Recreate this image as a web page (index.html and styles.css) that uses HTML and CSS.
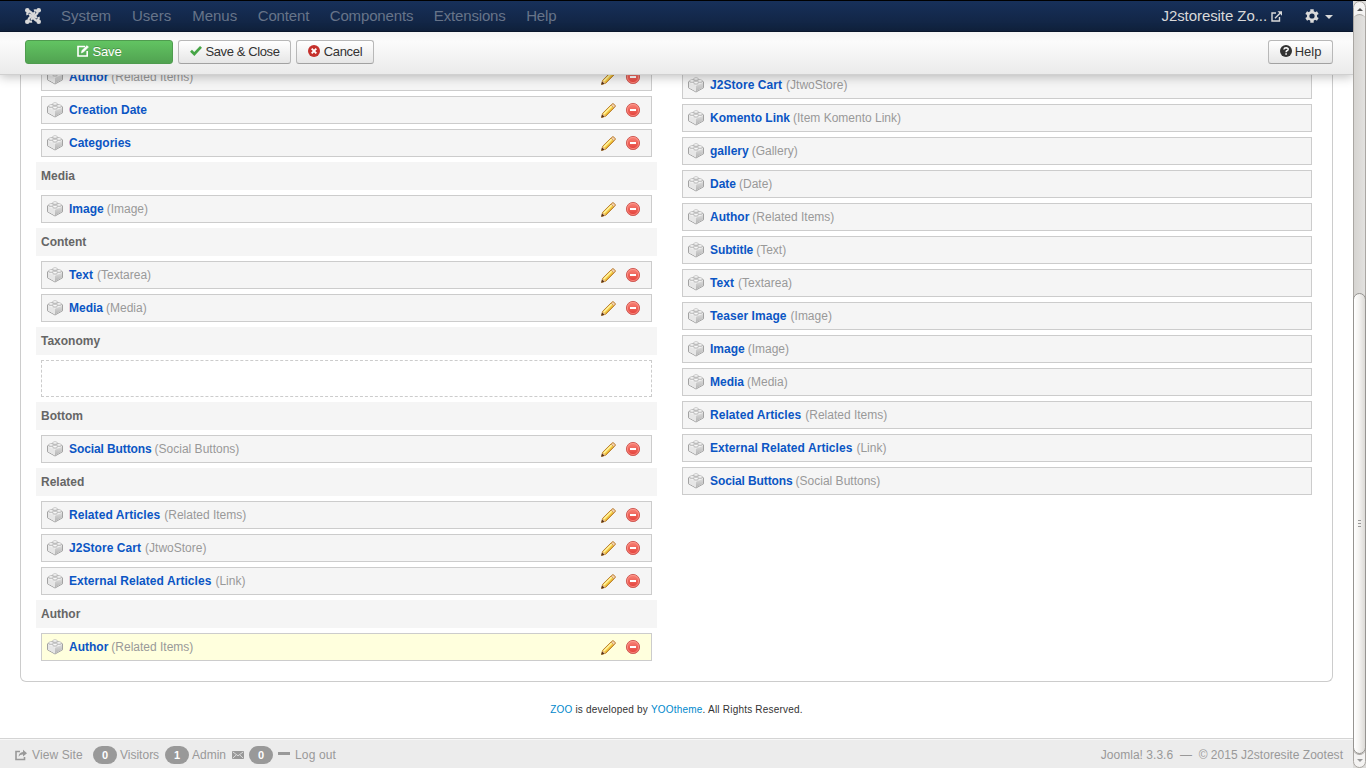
FILE: index.html
```
<!DOCTYPE html>
<html lang="en">
<head>
<meta charset="utf-8">
<title>J2storesite Zootest - Administration</title>
<link rel="stylesheet" href="styles.css">
</head>
<body>
<svg class="defs" aria-hidden="true">
  <defs>
    <linearGradient id="red" x1="0" y1="0" x2="0" y2="1"><stop offset="0" stop-color="#f9877b"/><stop offset="1" stop-color="#e23c36"/></linearGradient>
    <linearGradient id="brick-side" x1="0" y1="0" x2="0" y2="1"><stop offset="0" stop-color="#dcdcdc"/><stop offset="1" stop-color="#b4b4b4"/></linearGradient>
  </defs>
  <symbol id="brick" viewBox="0 0 16 16">
    <path d="M.5 4.800 5.500 2.500h5l5 2.300v6L8 15 .5 10.800z" fill="#f2f2f2" stroke="#a2a2a2" stroke-width="1" stroke-linejoin="round"/>
    <path d="M8 8.800 15 5.800v4.700L8 14.500z" fill="url(#brick-side)"/>
    <path d="M1 5.800 8 8.800v5.700l-7-4z" fill="#e6e6e6"/>
    <path d="M5.700 1.900v2h4.600v-2M1.700 4v1.700h4.500V4M9.800 4v1.700h4.500V4M5.700 5.800v1.800h4.600V5.800" fill="#c4c4c4"/>
    <g fill="#fdfdfd" stroke="#b0b0b0" stroke-width=".7"><ellipse cx="8" cy="1.900" rx="2.300" ry="1.200"/><ellipse cx="4" cy="3.900" rx="2.300" ry="1.200"/><ellipse cx="12" cy="3.900" rx="2.300" ry="1.200"/><ellipse cx="8" cy="5.700" rx="2.300" ry="1.200"/></g>
  </symbol>
  <symbol id="pencil" viewBox="0 0 16 16">
    <path d="M.6 15.400 1.700 11 11.300 1.500Q12.300.6 13.300 1l1.500 1.300q.8.900 0 2L5.200 14z" fill="#f6d04d" stroke="#b67a28" stroke-width="1"/>
    <path d="M3 11.800 11.500 3.300" stroke="#fff3a0" stroke-width="1.500"/>
    <path d="M4.700 13.200 13.200 4.700" stroke="#dfa52a" stroke-width="1"/>
    <path d="m10.800 2.200 1.500-1.100 1.200.1 1.300 1.300-.1 1.600-1 1.200z" fill="#f3d2ae" stroke="#c08850" stroke-width=".7"/>
    <path d="m1.900 11.300 3 2.700-4 1.200z" fill="#e9c092"/>
    <path d="m.3 15.700.8-3.500 2.600 2.500z" fill="#54301a"/>
  </symbol>
  <symbol id="minus" viewBox="0 0 16 16">
    <circle cx="8" cy="8" r="6.600" fill="url(#red)" stroke="#d0605a" stroke-width="1"/>
    <circle cx="8" cy="8" r="5.600" fill="none" stroke="#ff9d92" stroke-width=".7"/>
    <path d="M5 7h6v2H5z" fill="#fff"/>
  </symbol>
</svg>

<div class="window">
  <div class="page">
    <header class="top">
      <nav class="navbar">
        <svg class="joomla" viewBox="0 0 16 16"><g fill="none" stroke="#d9d9d9" stroke-width="2.300" stroke-linejoin="round"><path d="M2.600 7Q1.800 5 3.300 3.800q1.300-.9 2.700.5l5.800 5.800"/><path d="M9 2.600q2-.8 3.200.7.900 1.300-.5 2.700L5.900 11.800"/><path d="M13.400 9q.8 2-.7 3.200-1.300.9-2.700-.5L4.200 5.900"/><path d="M7 13.400q-2 .8-3.200-.7-.9-1.300.5-2.700l5.800-5.800"/></g><g fill="#d9d9d9"><circle cx="2.300" cy="2.300" r="2.300"/><circle cx="13.700" cy="2.300" r="2.300"/><circle cx="2.300" cy="13.700" r="2.300"/><circle cx="13.700" cy="13.700" r="2.300"/></g></svg>
        <ul class="menu"><li>System</li><li>Users</li><li>Menus</li><li class="tight">Content</li><li class="tight">Components</li><li class="tight">Extensions</li><li class="tight">Help</li></ul>
        <span class="site">J2storesite Zo...</span>
        <svg class="external" viewBox="0 0 11 11" fill="none" stroke="#d9d9d9" stroke-width="1.400"><path d="M5 2H1v8h7.500V6M4 7.200l5.500-5.500"/><path d="M6.500.2H11v4.500z" fill="#d9d9d9" stroke="none"/></svg>
        <svg class="gear" viewBox="0 0 14 14"><g stroke="#d9d9d9" stroke-width="3.400"><path d="M7 .3v13.400M1.200 3.600l11.600 6.800M12.800 3.600 1.200 10.400"/></g><circle cx="7" cy="7" r="5.100" fill="#d9d9d9"/><circle cx="7" cy="7" r="2.600" fill="#142848"/></svg>
        <span class="caret"></span>
      </nav>
      <div class="toolbar">
        <button class="btn save"><svg viewBox="0 0 12 12" fill="none" stroke="#fff"><path d="M8 1.500H1v9.500h9.200V6" stroke-width="1.600"/><path d="m4.300 8 .6-2.400L10 .6l1.500 1.500-5 5z" fill="#fff" stroke-width=".5"/></svg><span>Save</span></button>
        <button class="btn saveclose"><svg viewBox="0 0 12 12"><path d="M1 5.800 4.300 9 11 1.800" fill="none" stroke="#46a546" stroke-width="2.700"/></svg><span>Save &amp; Close</span></button>
        <button class="btn cancel"><svg viewBox="0 0 12 12"><circle cx="6" cy="6" r="6" fill="#c5302b"/><path d="m3.700 3.700 4.600 4.600m0-4.600L3.700 8.300" stroke="#fff" stroke-width="1.900"/></svg><span>Cancel</span></button>
        <button class="btn help"><svg viewBox="0 0 12 12"><circle cx="6" cy="6" r="6" fill="#333"/><path d="M3.900 4.500q.2-1.700 2.200-1.700 2.100.1 2.100 1.500 0 1-1.200 1.500-.9.400-.9 1.400" fill="none" stroke="#fff" stroke-width="1.500"/><path d="M5.300 8.200h1.600v1.500H5.300z" fill="#fff"/></svg><span>Help</span></button>
      </div>
    </header>

    <main class="panel">
      <section class="positions">
        <div class="item"><svg class="brick"><use href="#brick"/></svg><b>Author</b><span>(Related Items)</span><svg class="edit"><use href="#pencil"/></svg><svg class="remove"><use href="#minus"/></svg></div>
        <div class="item"><svg class="brick"><use href="#brick"/></svg><b>Creation Date</b><svg class="edit"><use href="#pencil"/></svg><svg class="remove"><use href="#minus"/></svg></div>
        <div class="item"><svg class="brick"><use href="#brick"/></svg><b>Categories</b><svg class="edit"><use href="#pencil"/></svg><svg class="remove"><use href="#minus"/></svg></div>
        <h2>Media</h2>
        <div class="item"><svg class="brick"><use href="#brick"/></svg><b>Image</b><span>(Image)</span><svg class="edit"><use href="#pencil"/></svg><svg class="remove"><use href="#minus"/></svg></div>
        <h2>Content</h2>
        <div class="item"><svg class="brick"><use href="#brick"/></svg><b class="wide">Text</b><span>(Textarea)</span><svg class="edit"><use href="#pencil"/></svg><svg class="remove"><use href="#minus"/></svg></div>
        <div class="item"><svg class="brick"><use href="#brick"/></svg><b>Media</b><span>(Media)</span><svg class="edit"><use href="#pencil"/></svg><svg class="remove"><use href="#minus"/></svg></div>
        <h2>Taxonomy</h2>
        <div class="empty"></div>
        <h2>Bottom</h2>
        <div class="item"><svg class="brick"><use href="#brick"/></svg><b class="narrow">Social Buttons</b><span>(Social Buttons)</span><svg class="edit"><use href="#pencil"/></svg><svg class="remove"><use href="#minus"/></svg></div>
        <h2>Related</h2>
        <div class="item"><svg class="brick"><use href="#brick"/></svg><b class="wide">Related Articles</b><span>(Related Items)</span><svg class="edit"><use href="#pencil"/></svg><svg class="remove"><use href="#minus"/></svg></div>
        <div class="item"><svg class="brick"><use href="#brick"/></svg><b class="wide">J2Store Cart</b><span>(JtwoStore)</span><svg class="edit"><use href="#pencil"/></svg><svg class="remove"><use href="#minus"/></svg></div>
        <div class="item"><svg class="brick"><use href="#brick"/></svg><b class="wide">External Related Articles</b><span>(Link)</span><svg class="edit"><use href="#pencil"/></svg><svg class="remove"><use href="#minus"/></svg></div>
        <h2>Author</h2>
        <div class="item active"><svg class="brick"><use href="#brick"/></svg><b>Author</b><span>(Related Items)</span><svg class="edit"><use href="#pencil"/></svg><svg class="remove"><use href="#minus"/></svg></div>
      </section>
      <section class="elements">
        <div class="item"><svg class="brick"><use href="#brick"/></svg><b class="wide">J2Store Cart</b><span>(JtwoStore)</span></div>
        <div class="item"><svg class="brick"><use href="#brick"/></svg><b>Komento Link</b><span>(Item Komento Link)</span></div>
        <div class="item"><svg class="brick"><use href="#brick"/></svg><b>gallery</b><span>(Gallery)</span></div>
        <div class="item"><svg class="brick"><use href="#brick"/></svg><b>Date</b><span>(Date)</span></div>
        <div class="item"><svg class="brick"><use href="#brick"/></svg><b>Author</b><span>(Related Items)</span></div>
        <div class="item"><svg class="brick"><use href="#brick"/></svg><b class="narrow">Subtitle</b><span>(Text)</span></div>
        <div class="item"><svg class="brick"><use href="#brick"/></svg><b class="wide">Text</b><span>(Textarea)</span></div>
        <div class="item"><svg class="brick"><use href="#brick"/></svg><b class="wide">Teaser Image</b><span>(Image)</span></div>
        <div class="item"><svg class="brick"><use href="#brick"/></svg><b>Image</b><span>(Image)</span></div>
        <div class="item"><svg class="brick"><use href="#brick"/></svg><b>Media</b><span>(Media)</span></div>
        <div class="item"><svg class="brick"><use href="#brick"/></svg><b class="wide">Related Articles</b><span>(Related Items)</span></div>
        <div class="item"><svg class="brick"><use href="#brick"/></svg><b class="wide">External Related Articles</b><span>(Link)</span></div>
        <div class="item"><svg class="brick"><use href="#brick"/></svg><b class="narrow">Social Buttons</b><span>(Social Buttons)</span></div>
      </section>
    </main>
    <p class="credit"><a>ZOO</a> is developed by <a>YOOtheme</a>. All Rights Reserved.</p>

    <footer class="status">
      <svg class="share" viewBox="0 0 12 12"><path d="M5 2.500H1v8h8.500V8" fill="none" stroke="#999" stroke-width="1.600"/><path d="M8 .8 12 4.200 8 7.500V5.400Q5 5.200 3.600 7.800 3.800 3.200 8 2.900z" fill="#999"/></svg>
      <span class="view">View Site</span>
      <span class="badge">0</span><span class="visitors">Visitors</span>
      <span class="badge">1</span><span class="admin">Admin</span>
      <svg class="mail" viewBox="0 0 12 8"><path d="M0 0h12v8H0z" fill="#999"/><path d="m.7.800 5.300 4 5.300-4M.7 7.200l3.300-3M11.300 7.200l-3.300-3" fill="none" stroke="#ececec" stroke-width=".8"/></svg>
      <span class="badge">0</span><span class="dash"></span><span class="logout">Log out</span>
      <span class="version">Joomla! 3.3.6 &nbsp;—&nbsp; © 2015 J2storesite Zootest</span>
    </footer>
  </div>

  <div class="scrollbar">
    <div class="arrow up"><i></i></div>
    <div class="trough"><div class="thumb"><i></i><i></i><i></i></div></div>
    <div class="arrow down"><i></i></div>
  </div>
</div>
</body>
</html>
```
FILE: styles.css
```
* { box-sizing: border-box; }
body { margin: 0; background: #fff; color: #333; font: 12px/18px "Liberation Sans", Arial, sans-serif; }
svg { display: block; flex: none; }
.defs { position: absolute; width: 0; height: 0; }
.window { display: flex; height: 768px; overflow: hidden; border-top: 1px solid #000; }
.page { display: flex; flex-direction: column; width: 1353px; }

.top { position: relative; z-index: 1; flex: none; }
.navbar { display: flex; align-items: center; height: 31px; padding: 0 20px 0 25px; background: linear-gradient(#17305a, #10223e); border-bottom: 1px solid #0b1930; }
.joomla { width: 16px; height: 16px; }
.menu { display: flex; gap: 21px; margin: 0 auto 0 20px; padding: 0; list-style: none; color: #677489; font-size: 15px; }
.menu .tight { margin-left: -.5px; letter-spacing: -.15px; }
.site { color: #d9d9d9; font-size: 15px; letter-spacing: -.07px; }
.external { width: 11px; height: 11px; margin-left: 4px; }
.gear { width: 14px; height: 14px; margin-left: 23px; }
.caret { margin: 2px 0 0 6px; border: 4px solid transparent; border-top-color: #d9d9d9; border-bottom: 0; }
.toolbar { display: flex; gap: 5px; height: 43px; padding: 8px 20px 0 25px; background: linear-gradient(#f5f5f5, #fbfbfb 10px, #ebebeb); border-bottom: 1px solid #d0d0d0; box-shadow: 0 2px 10px rgba(0, 0, 0, .25); }
.btn { display: flex; align-items: center; justify-content: center; gap: 4px; height: 24px; padding: 0 0 2px; border: 1px solid #b8b8b8; border-bottom-color: #a2a2a2; border-radius: 3px; background: linear-gradient(#fff, #e6e6e6); color: #333; font: 13px "Liberation Sans", Arial, sans-serif; letter-spacing: -.4px; white-space: nowrap; }
.btn svg { width: 12px; height: 12px; }
.save { width: 148px; background: linear-gradient(#62c462, #51a351); border-color: #4f9c4f; color: #fff; letter-spacing: -.2px; text-shadow: 0 -1px 0 rgba(0, 0, 0, .25); }
.saveclose { width: 113px; }
.cancel { width: 78px; letter-spacing: -.3px; }
.help { width: 65px; margin-left: auto; letter-spacing: 0; gap: 3px; }

.panel { display: flex; flex: none; justify-content: space-between; height: 619px; margin: -12px 20px 0; padding: 0 20px 0 15px; border: 1px solid #ccc; border-top: 0; border-radius: 0 0 6px 6px; }
.positions, .elements { display: flex; flex-direction: column; gap: 5px; }
.positions { width: 621px; }
.elements { width: 630px; padding-top: 8px; }
.positions .item, .empty { margin: 0 5px; }
.positions h2 { height: 28px; margin: 0; padding-left: 5px; background: #f5f5f5; color: #666; font-size: 12px; line-height: 28px; }
.item { display: flex; align-items: center; flex: none; height: 28px; padding: 0 10px 0 5px; background: #f5f5f5; border: 1px solid #ccc; color: #999; line-height: 26px; }
.item.active { background: #ffffdd; }
.item b { margin: 0 3px 0 6px; color: #0b55c4; }
.item b.wide { margin-right: 4px; letter-spacing: .06px; }
.item b.narrow { letter-spacing: -.1px; }
.brick, .edit, .remove { width: 16px; height: 16px; }
.brick { margin-bottom: 1px; }
.edit { width: 15px; height: 15px; margin-left: auto; }
.remove { margin-left: 9px; }
.empty { flex: none; height: 37px; border: 1px dashed #ccc; }
.credit { margin: 19px 0 0; text-align: center; font-size: 10px; letter-spacing: .21px; }
.credit a { color: #08c; }

.status { display: flex; align-items: center; height: 30px; margin-top: auto; padding: 2px 10px 0 15px; border-top: 1px solid #d4d4d4; background: #ececec; box-shadow: inset 0 1px #f8f8f8; color: #999; font-size: 12px; }
.share { width: 12px; height: 12px; margin-right: 5px; }
.badge { width: 24px; height: 18px; border-radius: 9px; background: #999; color: #fff; font-size: 11px; font-weight: bold; text-align: center; }
.view { width: 61px; letter-spacing: .1px; }
.visitors { width: 48px; padding-left: 3px; }
.admin { width: 43px; padding-left: 3px; }
.mail { width: 12px; height: 8px; margin-right: 5px; }
.dash { width: 12px; height: 3px; margin: -2px 5px 0; background: #999; }
.logout { letter-spacing: .15px; }
.version { margin-left: auto; letter-spacing: .03px; }

.scrollbar { display: flex; flex-direction: column; width: 13px; background: #dddcda; }
.arrow { display: flex; align-items: center; justify-content: center; height: 20px; background: #f4f3f2; border: 1px solid #aaa7a3; }
.arrow i { border: 3px solid transparent; }
.up { border-radius: 7px 7px 0 0; padding-bottom: 4px; }
.up i { border-top: 0; border-bottom-color: #555; }
.down { border-radius: 0 0 7px 7px; padding-top: 4px; }
.down i { border-bottom: 0; border-top-color: #999; }
.trough { z-index: 1; display: flex; align-items: flex-end; height: 741px; margin: -7px 0; border: 1px solid #aaa7a3; border-width: 1px 0; border-radius: 7px; background: linear-gradient(90deg, #aaa7a3 1px, #d6d4d1 1px, #e2e1df 12px, #aaa7a3 12px); }
.thumb { display: flex; flex-direction: column; align-items: center; justify-content: center; gap: 2px; width: 13px; height: 461px; border: 1px solid #969491; border-radius: 7px; background: linear-gradient(90deg, #fff, #f4f3f1 5px, #dcdad7); }
.thumb i { width: 3px; height: 1px; background: #999; }
```
